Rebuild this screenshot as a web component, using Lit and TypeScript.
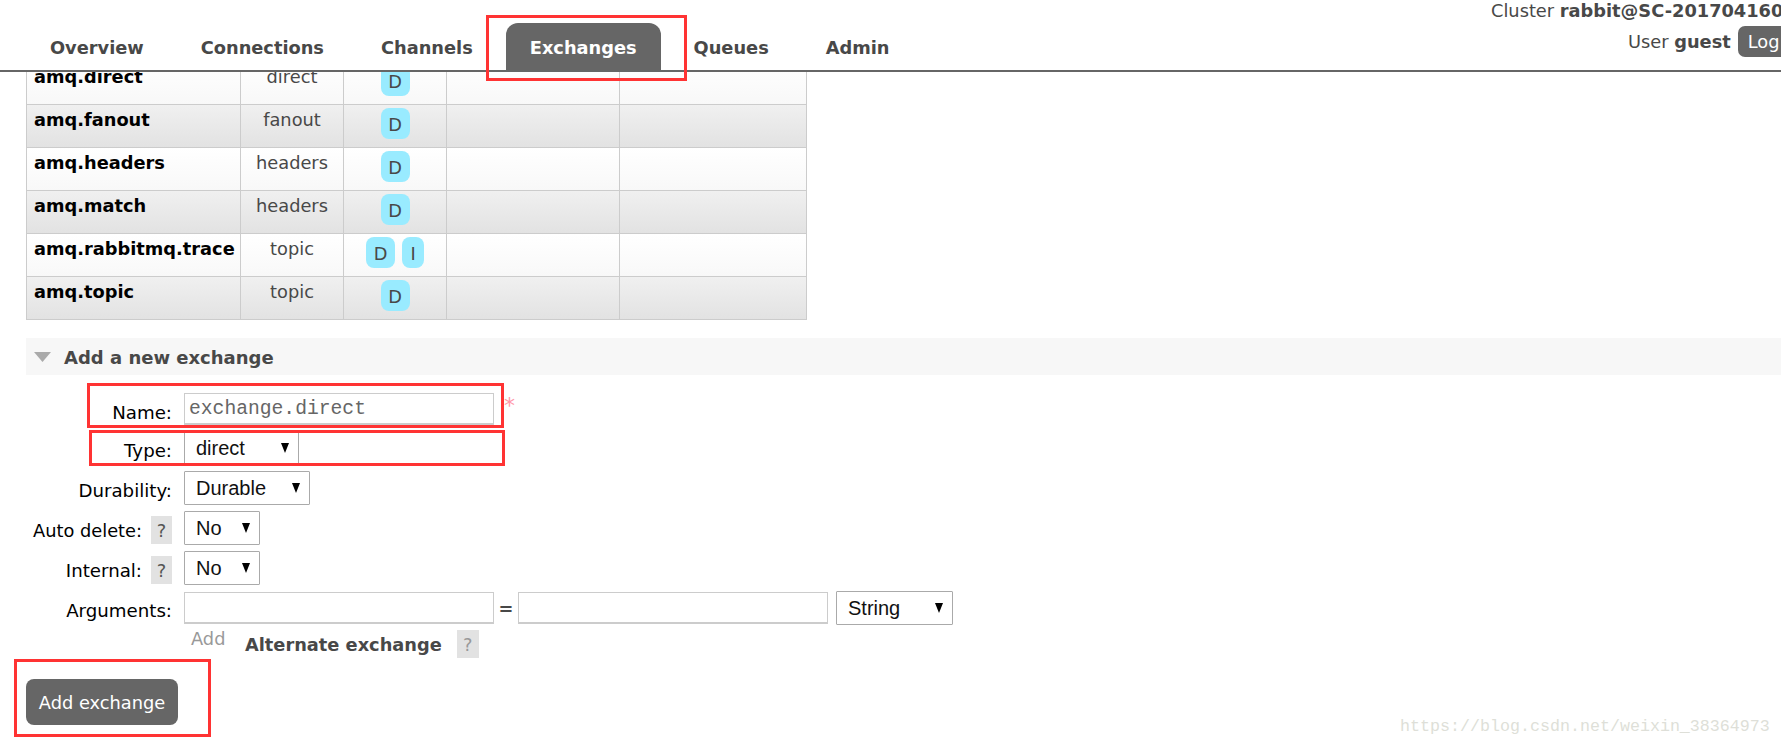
import { LitElement, html, css } from "lit";
import { customElement } from "lit/decorators.js";

const ROWS = [
  { name: "amq.direct", type: "direct", flags: ["D"] },
  { name: "amq.fanout", type: "fanout", flags: ["D"] },
  { name: "amq.headers", type: "headers", flags: ["D"] },
  { name: "amq.match", type: "headers", flags: ["D"] },
  { name: "amq.rabbitmq.trace", type: "topic", flags: ["D", "I"] },
  { name: "amq.topic", type: "topic", flags: ["D"] },
];

const TABS = ["Overview", "Connections", "Channels", "Exchanges", "Queues", "Admin"];

@customElement("app-root")
export class AppRoot extends LitElement {
  static styles = css`
    :host {
      display: block;
      position: relative;
      width: 1781px;
      height: 747px;
      overflow: hidden;
      background: #fff;
      font-family: "DejaVu Sans", Verdana, sans-serif;
      font-size: 17.8px;
      color: #484848;
    }
    .header {
      position: absolute;
      top: 0;
      left: 0;
      right: 0;
      height: 70px;
      background: #fff;
      border-bottom: 2px solid #666;
      z-index: 2;
    }
    .tabs {
      display: flex;
      gap: 9px;
      padding: 23px 0 0 26px;
      height: 47px;
      box-sizing: content-box;
    }
    .tab {
      padding: 0 24px;
      font-weight: 700;
      line-height: 49px;
      color: #484848;
      white-space: nowrap;
    }
    .tab.on {
      background: #666;
      color: #fff;
      border-radius: 12px 12px 0 0;
    }
    .status {
      position: absolute;
      top: 0;
      right: 0;
      display: flex;
      flex-direction: column;
      white-space: nowrap;
      width: 290px;
    }
    .cluster { line-height: 22px; }
    .user {
      display: flex;
      align-items: center;
      gap: 7px;
      height: 31px;
      margin-top: 4px;
      padding-left: 137px;
    }
    .log {
      background: #666;
      color: #fff;
      border-radius: 7px 0 0 7px;
      padding: 0 0 0 10px;
      width: 33px;
      height: 31px;
      line-height: 31px;
      overflow: hidden;
    }
    b { font-weight: 700; }
    .main { padding: 61px 0 0 26px; }
    table {
      border-collapse: collapse;
      table-layout: fixed;
      width: 780px;
    }
    td {
      border: 1px solid #ccc;
      height: 43px;
      padding: 0;
      box-sizing: border-box;
      vertical-align: top;
      text-align: center;
    }
    .c1 { width: 214px; }
    .c2 { width: 103px; }
    .c3 { width: 103px; }
    .c4 { width: 173px; }
    .c5 { width: 187px; }
    tr.odd { background: linear-gradient(#fff, #f8f8f8); }
    tr.alt { background: linear-gradient(#f0f0f0, #e2e2e2); }
    .name {
      font-weight: 700;
      color: #000;
      text-align: left;
      padding: 4px 0 0 7px;
      line-height: 22px;
      white-space: nowrap;
    }
    .type { padding-top: 4px; line-height: 22px; }
    .flags {
      display: flex;
      justify-content: center;
      gap: 7px;
      padding-top: 3px;
    }
    .flag {
      min-width: 22px;
      height: 31px;
      line-height: 33px;
      border-radius: 8px;
      background: #99ebff;
      color: #484848;
      text-align: center;
    }
    .flag.wide { width: 29px; }
    .section {
      display: flex;
      align-items: center;
      gap: 13px;
      margin-top: 18px;
      height: 37px;
      padding-left: 8px;
      background: #f7f7f7;
      font-size: 18px;
      font-weight: 700;
      color: #484848;
    }
    .section span { padding-top: 2px; }
    .form { padding-top: 16px; margin-left: -26px; }
    .row {
      display: flex;
      align-items: flex-start;
      height: 40px;
    }
    .label {
      width: 172px;
      display: flex;
      justify-content: flex-end;
      align-items: center;
      gap: 9px;
      height: 34px;
      flex: none;
      color: #000;
      font-size: 18.2px;
      padding-top: 2px;
      box-sizing: content-box;
      white-space: nowrap;
    }
    .label.tight { font-size: 17.8px; }
    .row.named .label { padding-top: 4px; }
    .help {
      width: 21px;
      height: 28px;
      line-height: 30px;
      background: #e2e2e2;
      color: #555;
      text-align: center;
      flex: none;
      font-size: 17.8px;
    }
    .control { margin-left: 12px; display: flex; gap: 8px; align-items: center; }
    .row.named .control { gap: 10px; align-items: flex-start; margin-top: 2px; }
    input {
      box-sizing: border-box;
      width: 310px;
      height: 32px;
      border: 1px solid #ccc;
      border-bottom-width: 2px;
      padding: 0 4px;
      margin: 0;
      font-family: "Liberation Mono", monospace;
      font-size: 19.67px;
      color: #666;
      background: #fff;
      outline: none;
    }
    .req { color: #f9a; font-size: 22px; line-height: 24px; position: relative; top: 1px; }
    .eq { font-weight: 700; width: 16px; text-align: center; margin: 0 -4px; }
    .pick { position: relative; display: inline-block; }
    select {
      appearance: none;
      display: block;
      box-sizing: border-box;
      height: 34px;
      margin: 0;
      padding: 0 0 0 11px;
      border: 1px solid #aaa;
      border-radius: 1px;
      background: #fff;
      color: #111;
      font-family: "Liberation Sans", Arial, sans-serif;
      font-size: 20px;
    }
    .arrow {
      position: absolute;
      top: 12px;
      right: 10px;
      width: 0;
      height: 0;
      border-left: 4.5px solid transparent;
      border-right: 4.5px solid transparent;
      border-top: 10px solid #000;
      pointer-events: none;
    }
    .more {
      display: flex;
      align-items: flex-start;
      margin-top: -1px;
      padding-left: 191px;
      height: 28px;
    }
    .add { color: #999; line-height: 18px; width: 54px; }
    .alt-label { font-weight: 700; padding-top: 4px; line-height: 22px; }
    .more .help { margin-left: 15px; width: 22px; color: #999; }
    .submit {
      display: inline-block;
      margin: 21px 0 0 26px;
      width: 152px;
      height: 46px;
      line-height: 46px;
      background: #666;
      color: #fff;
      border: none;
      padding: 0;
      border-radius: 8px;
      font: inherit;
    }
    .mark {
      position: absolute;
      top: 716px;
      left: 1400px;
      font-family: "Liberation Mono", monospace;
      font-size: 16.67px;
      line-height: 22px;
      color: #dedfd8;
      white-space: nowrap;
      z-index: 3;
    }
    .red {
      position: absolute;
      box-sizing: border-box;
      border: 3px solid #f33;
      z-index: 4;
      pointer-events: none;
    }
    .r1 { left: 486px; top: 15px; width: 201px; height: 66px; }
    .r2 { left: 87px; top: 383px; width: 417px; height: 45px; }
    .r3 { left: 89px; top: 430px; width: 416px; height: 36px; }
    .r4 { left: 14px; top: 659px; width: 197px; height: 78px; }
  `;

  private pick(label: string, w: number) {
    return html`<span class="pick">
      <select style="width:${w}px"><option>${label}</option></select>
      <span class="arrow"></span>
    </span>`;
  }

  render() {
    return html`
      <div class="header">
        <div class="tabs">
          ${TABS.map((t) => html`<div class="tab ${t === "Exchanges" ? "on" : ""}">${t}</div>`)}
        </div>
        <div class="status">
          <div class="cluster">Cluster <b>rabbit@SC-201704160</b></div>
          <div class="user"><span>User <b>guest</b></span><span class="log">Log</span></div>
        </div>
      </div>

      <div class="main">
        <table>
          <colgroup>
            <col class="c1" /><col class="c2" /><col class="c3" /><col class="c4" /><col class="c5" />
          </colgroup>
          ${ROWS.map(
            (r, i) => html`<tr class="${i % 2 ? "alt" : "odd"}">
              <td class="name">${r.name}</td>
              <td class="type">${r.type}</td>
              <td>
                <div class="flags">
                  ${r.flags.map((f) => html`<span class="flag ${f === "D" ? "wide" : ""}">${f}</span>`)}
                </div>
              </td>
              <td></td>
              <td></td>
            </tr>`
          )}
        </table>

        <div class="section">
          <svg width="17" height="10" viewBox="0 0 17 10"><path d="M0 0H17L8.5 10Z" fill="#aaa" /></svg>
          <span>Add a new exchange</span>
        </div>

        <div class="form">
          <div class="row named">
            <div class="label">Name:</div>
            <div class="control">
              <input value="exchange.direct" /><span class="req">*</span>
            </div>
          </div>
          <div class="row">
            <div class="label">Type:</div>
            <div class="control">${this.pick("direct", 115)}</div>
          </div>
          <div class="row">
            <div class="label">Durability:</div>
            <div class="control">${this.pick("Durable", 126)}</div>
          </div>
          <div class="row">
            <div class="label tight">Auto delete:<span class="help">?</span></div>
            <div class="control">${this.pick("No", 76)}</div>
          </div>
          <div class="row">
            <div class="label">Internal:<span class="help">?</span></div>
            <div class="control">${this.pick("No", 76)}</div>
          </div>
          <div class="row">
            <div class="label">Arguments:</div>
            <div class="control">
              <input /><span class="eq">=</span><input />${this.pick("String", 117)}
            </div>
          </div>
          <div class="more">
            <span class="add">Add</span>
            <span class="alt-label">Alternate exchange</span>
            <span class="help">?</span>
          </div>
          <button class="submit">Add exchange</button>
        </div>
      </div>

      <div class="mark">https://blog.csdn.net/weixin_38364973</div>
      <div class="red r1"></div>
      <div class="red r2"></div>
      <div class="red r3"></div>
      <div class="red r4"></div>
    `;
  }
}
